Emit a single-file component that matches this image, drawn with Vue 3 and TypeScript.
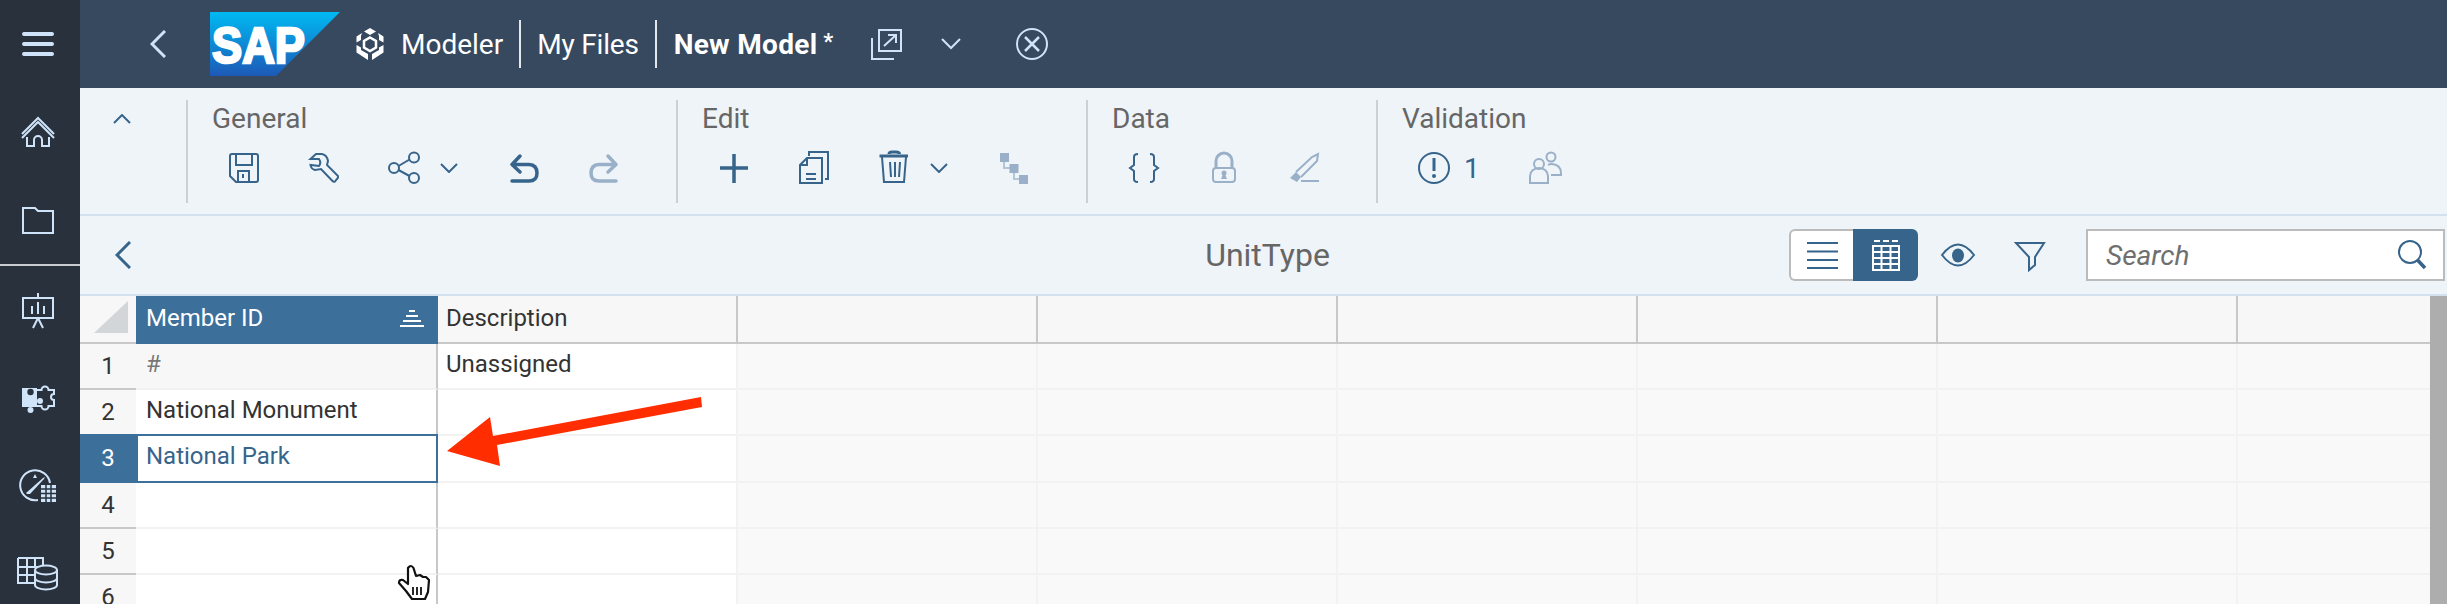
<template>
  <div class="app">
    <!-- left nav -->
    <nav class="side">
      <svg class="nav-icon" viewBox="0 0 48 48"><path d="M10 14H38M10 24H38M10 34H38" fill="none" stroke-width="4" stroke-linecap="round" /></svg>
      <svg class="nav-icon line" viewBox="0 0 48 48">
        <path d="M8 26 24 10 40 26M8 30 24 14 40 30M13 29V38H20V32a4 4 0 0 1 8 0V38H35V29" />
      </svg>
      <svg class="nav-icon line" viewBox="0 0 48 48">
        <path d="M9 12H21L24 15H39V37H9Z" />
      </svg>
      <div class="side-div"></div>
      <svg class="nav-icon line" viewBox="0 0 48 48">
        <path d="M9 14H39V34H9ZM24 9V14M24 34 19 44M24 34 29 44M18 22V30M24 18V30M30 22V30" />
      </svg>
      <svg class="nav-icon line" viewBox="0 0 48 48">
        <path class="solid" d="M8 16H23V35H8Z" />
        <circle class="hole" cx="16.5" cy="20" r="3.2" />
        <circle class="solid" cx="16.5" cy="38" r="3" />
        <circle class="solid" cx="26" cy="29" r="3" />
        <path d="M23 18H27.5A3.5 3.5 0 1 1 34.5 18H40V22A3 3 0 0 0 40 28V34H34.5A3.5 3.5 0 1 1 27.5 34H23" />
      </svg>
      <svg class="nav-icon line" viewBox="0 0 48 48">
        <path d="M36 23A15 15 0 1 0 24 40" />
        <path class="solid" d="M12 33 29 18 31 17 30 19 16 34 13 34Z" />
        <path class="solid" d="M21 14 23 18H19Z" />
        <path class="solid" d="M27 25H42V42H27Z" />
        <path class="thin" d="M32 25V42M37 25V42M27 29H42M27 33.5H42M27 38H42" />
      </svg>
      <svg class="nav-icon line" viewBox="0 0 48 48">
        <path d="M4 10H29V18M4 10V35H20M4 19H29M4 27H20M13 10V35M21 10V19" />
        <ellipse class="fill-dark" cx="32" cy="22" rx="11" ry="4.5" />
        <path d="M21 22V37C21 39.5 26 41.5 32 41.5S43 39.5 43 37V22M21 30C21 32.5 26 34.5 32 34.5S43 32.5 43 30" />
      </svg>
    </nav>

    <div class="main">
      <!-- shell bar -->
      <header class="shell">
        <svg class="back" width="16" height="28" viewBox="0 0 16 28"><path d="M15 1 2 14 15 27" /></svg>
        <svg class="logo" width="130" height="64" viewBox="0 0 130 64">
          <defs>
            <linearGradient id="sapGrad" x1="0" y1="0" x2="0" y2="1">
              <stop offset="0" stop-color="#00b9f2" />
              <stop offset="1" stop-color="#1d59b7" />
            </linearGradient>
          </defs>
          <polygon points="0,0 130,0 66,64 0,64" fill="url(#sapGrad)" />
          <text x="2" y="51" class="logo-text" textLength="93" lengthAdjust="spacingAndGlyphs">SAP</text>
        </svg>
        <svg class="app-mark" width="28" height="32" viewBox="0 0 28 32">
          <path d="M14 0 20 3.5 14 7 8 3.5ZM22 5 27.5 8.5V14.5L23 12V8ZM6 5 .5 8.5V14.5L5 12V8ZM.5 17 5 19.5V22L12 26V32L.5 24.5ZM27.5 17 23 19.5V22L16 26V32L27.5 24.5Z" fill="#fff" />
          <path d="M14 9.500 20 13V19.500L14 23 8 19.500V13Z" fill="none" stroke="#fff" stroke-width="2.500" />
        </svg>
        <span class="crumb">Modeler</span>
        <span class="bar"></span>
        <span class="crumb files">My Files</span>
        <span class="bar"></span>
        <span class="crumb model">New Model</span>
        <span class="star">*</span>
        <svg class="ext" width="34" height="34" viewBox="0 0 34 34">
          <path d="M10 3H32V24H10ZM3 11V32H25M15 19 27 8M19 8H27V16" />
        </svg>
        <svg class="shell-chev" width="20" height="12" viewBox="0 0 20 12"><path d="M1 1 10 10 19 1" /></svg>
        <svg class="close" width="34" height="34" viewBox="0 0 34 34">
          <circle cx="17" cy="17" r="15" />
          <path d="M10 10 24 24M24 10 10 24" stroke-width="2.500" />
        </svg>
      </header>

      <!-- toolbar -->
      <section class="toolbar">
        <div class="collapse">
          <svg width="18" height="10" viewBox="0 0 18 10"><path d="M1 9 9 1 17 9" /></svg>
        </div>

        <div class="group">
          <div class="group-label">General</div>
          <div class="group-row">
            <button class="tb">
              <svg viewBox="0 0 40 40"><path d="M8 6H32Q34 6 34 8V32Q34 34 32 34H12L6 28V8Q6 6 8 6ZM12 6V17H28V6M14 34V23H25V34M19 26V30" /></svg>
            </button>
            <button class="tb">
              <svg viewBox="0 0 40 40"><path d="M6.500 11 12 6H18Q23 7 24 13L23 17 34 28Q34.500 29.500 33 31L31 33.500Q29.500 34 28.500 33L17 21 11 22Q7 21 6.500 17L15 18Q17.500 14.500 15 11Z" /></svg>
            </button>
            <button class="tb">
              <svg viewBox="0 0 40 40">
                <circle cx="30" cy="9.500" r="5" /><circle cx="10" cy="20" r="5" /><circle cx="30" cy="30" r="5" />
                <path d="M14.500 18 25.500 11.500M14.500 22 25.500 28" />
              </svg>
            </button>
            <span class="chev"><svg width="18" height="10" viewBox="0 0 18 10"><path d="M1 1 9 9 17 1" /></svg></span>
            <button class="tb">
              <svg viewBox="0 0 40 40"><path class="heavy" d="M16 8 8 16.500 16 24M8 16.500H25Q33 17 33 25T25 33H8" /></svg>
            </button>
            <button class="tb off">
              <svg viewBox="0 0 40 40"><path class="heavy" d="M24 8 32 16.500 24 24M32 16.500H15Q7 17 7 25T15 33H32" /></svg>
            </button>
          </div>
        </div>

        <div class="group">
          <div class="group-label">Edit</div>
          <div class="group-row">
            <button class="tb">
              <svg viewBox="0 0 40 40"><path d="M20 6V35M6 20H34" stroke-width="3.500" /></svg>
            </button>
            <button class="tb">
              <svg viewBox="0 0 40 40">
                <path d="M13 10H28V35H6V17ZM13 10V17H6M12 26H22M12 31H22" />
                <path d="M15 8V4H34V31H31" />
              </svg>
            </button>
            <button class="tb">
              <svg viewBox="0 0 40 40">
                <path d="M5.500 8H34" stroke-width="3" /><path d="M15 6Q15 4 18 4H22Q25.500 4 25.500 6" stroke-width="3" />
                <path d="M8 9 10 34H30L32 9M16 14 17 29M21 14V29M26 14 25 29" />
              </svg>
            </button>
            <span class="chev"><svg width="18" height="10" viewBox="0 0 18 10"><path d="M1 1 9 9 17 1" /></svg></span>
            <button class="tb off">
              <svg viewBox="0 0 40 40">
                <path class="link" d="M10 14V20H16M20 25V31H25" />
                <rect class="block" x="6" y="5" width="9" height="9" />
                <rect class="block" x="15.500" y="16" width="9" height="9" />
                <rect class="block" x="25" y="27" width="9" height="9" />
              </svg>
            </button>
          </div>
        </div>

        <div class="group">
          <div class="group-label">Data</div>
          <div class="group-row">
            <button class="tb">
              <svg viewBox="0 0 40 40"><path d="M14 6Q10 6 10 9V17L6 20 10 23V31Q10 34 14 34M26 6Q30 6 30 9V17L34 20 30 23V31Q30 34 26 34" /></svg>
            </button>
            <button class="tb off">
              <svg viewBox="0 0 40 40">
                <path d="M12 20V13A8 8 0 0 1 28 13V20" stroke-width="3" />
                <rect x="9" y="20" width="22" height="14" rx="3" />
                <circle class="block" cx="20" cy="25" r="2.500" /><path class="block" d="M19 26H21L23 31H17Z" />
              </svg>
            </button>
            <button class="tb off">
              <svg viewBox="0 0 40 40">
                <path d="M12 24 28 9 34 6 33 13 17 29" />
                <path class="block" d="M6 30 12 24 17 29 13 34Z" />
                <path d="M17 33H35" />
              </svg>
            </button>
          </div>
        </div>

        <div class="group">
          <div class="group-label">Validation</div>
          <div class="group-row">
            <button class="tb tb-count">
              <svg viewBox="0 0 40 40">
                <circle cx="20" cy="20" r="15" />
                <path d="M20 10V23" stroke-width="3" /><circle class="block-dark" cx="20" cy="28" r="2" />
              </svg>
              <span class="count">1</span>
            </button>
            <button class="tb off">
              <svg viewBox="0 0 40 40">
                <circle cx="15" cy="16" r="5" /><path d="M6 35V28A9 8 0 0 1 24 28V35Z" />
                <circle cx="27" cy="9" r="4.500" /><path d="M24 17A7 7 0 0 1 28 16Q37 17 37 25V27H27" />
              </svg>
            </button>
          </div>
        </div>
      </section>

      <!-- title bar -->
      <section class="titlebar">
        <svg class="title-back" width="16" height="28" viewBox="0 0 16 28"><path d="M15 1 2 14 15 27" /></svg>
        <div class="title">UnitType</div>
        <div class="tools">
          <div class="toggle">
            <span class="toggle-l">
              <svg width="34" height="30" viewBox="0 0 34 30"><path d="M2 3H33M2 11.500H33M2 20H33M2 28H33" /></svg>
            </span>
            <span class="toggle-r">
              <svg width="30" height="32" viewBox="0 0 30 32">
                <path d="M2 7H28V31H2ZM2 13H28M2 19H28M2 25H28M10.500 7V31M19.500 7V31" />
                <path d="M3 2H9M12 2H18M21 2H27" />
              </svg>
            </span>
          </div>
          <svg class="t-eye" width="40" height="40" viewBox="0 0 40 40">
            <path d="M4 20Q20 -1 36 20 20 41 4 20Z" />
            <ellipse cx="20" cy="20.500" rx="6" ry="7" class="block-dark" />
          </svg>
          <svg class="t-funnel" width="40" height="40" viewBox="0 0 40 40"><path d="M6 8H34L25 22V30L19 35V22Z" /></svg>
          <div class="search">
            <span class="search-text">Search</span>
            <svg width="40" height="40" viewBox="0 0 40 40"><circle cx="18" cy="17" r="11" /><path d="M25.500 25 33 33" stroke-width="3.500" /></svg>
          </div>
        </div>
      </section>

      <!-- dimension grid -->
      <section class="grid">
        <div class="corner"><span class="corner-tri"></span></div>
        <div class="hd hd-active">
          <span>Member ID</span>
          <svg width="24" height="17" viewBox="0 0 24 17"><path d="M9 1H15M6 6H18M3 11H21M0 16H24" stroke="#fff" stroke-width="2" /></svg>
        </div>
        <div class="hd">Description</div>
        <div v-for="n in 6" :key="'h' + n" class="hd"></div>

        <template v-for="row in rows" :key="row.num">
          <div class="num" :class="{ 'num-active': row.active }">{{ row.num }}</div>
          <div class="cell member" :class="{ 'cell-active': row.active, 'cell-hash': row.id === '#' }">{{ row.id }}</div>
          <div class="cell desc">{{ row.desc }}</div>
          <div v-for="n in 6" :key="n" class="cell blank"></div>
        </template>
        <div class="scrollbar"></div>
      </section>
    </div>

    <!-- annotation over the screenshot -->
    <svg class="arrow" width="2447" height="604" viewBox="0 0 2447 604">
      <polygon points="447,451 490,417 493,436 701,397 702,407 497,445 500,466" fill="#ff2d00" />
    </svg>
    <svg class="hand" width="34" height="37" viewBox="0 0 34 37">
      <path d="M11 4Q14 0 16.500 4L19 12 23 11 26 13 29 13 32 16 31 28 28 35H15L9 27 2 19Q2 15 6 16L11 20Z" fill="#fff" stroke="#111" stroke-width="2.200" stroke-linejoin="round" />
      <path d="M16 23V31M20 23V31M24 23V31" stroke="#111" stroke-width="1.800" />
    </svg>
  </div>
</template>

<script setup lang="ts">
interface Row {
  num: number;
  id: string;
  desc: string;
  active?: boolean;
}

const rows: Row[] = [
  { num: 1, id: "#", desc: "Unassigned" },
  { num: 2, id: "National Monument", desc: "" },
  { num: 3, id: "National Park", desc: "", active: true },
  { num: 4, id: "", desc: "" },
  { num: 5, id: "", desc: "" },
  { num: 6, id: "", desc: "" },
];
</script>

<style>
html,
body {
  margin: 0;
  overflow: hidden;
}
</style>

<style scoped>
.app {
  position: relative;
  display: flex;
  width: 2447px;
  height: 604px;
  overflow: hidden;
  font-family: Roboto, "Noto Sans", sans-serif;
  background: #fff;
}

/* left nav */
.side {
  width: 80px;
  flex: none;
  padding: 20px 0 0 14px;
  box-sizing: border-box;
  background: #29313d;
}
.nav-icon {
  display: block;
  width: 48px;
  height: 48px;
  margin-bottom: 40px;
  stroke: #cfe3f9;
}
.nav-icon.line path,
.nav-icon.line ellipse {
  fill: none;
  stroke-width: 2;
}
.nav-icon.line .solid,
.nav-icon.line circle.solid {
  fill: #cfe3f9;
  stroke: none;
}
.nav-icon.line .hole {
  fill: #29313d;
  stroke: none;
}
.nav-icon.line .thin {
  stroke: #29313d;
  stroke-width: 1.5;
}
.nav-icon.line .fill-dark {
  fill: #29313d;
}
.side-div {
  height: 2px;
  margin: -20px 0 18px -14px;
  background: #c9ccd0;
}

/* shell bar */
.main {
  flex: 1;
  min-width: 0;
  display: flex;
  flex-direction: column;
}
.shell {
  height: 88px;
  flex: none;
  display: flex;
  align-items: center;
  background: #36495f;
  color: #fff;
}
.shell svg path,
.shell svg circle {
  fill: none;
}
.shell .app-mark path:first-child {
  fill: #fff;
}
.back {
  margin-left: 70px;
  stroke: #cfe3f9;
  stroke-width: 3;
}
.logo {
  margin-left: 44px;
}
.logo-text {
  font-family: "Liberation Sans", sans-serif;
  font-size: 50px;
  font-weight: 700;
  fill: #fff;
  stroke: #fff;
  stroke-width: 2.5;
}
.app-mark {
  margin-left: 16px;
}
.crumb {
  font-size: 28px;
  margin-left: 17px;
  white-space: nowrap;
}
.files {
  margin-left: 16px;
  letter-spacing: -0.2px;
}
.model {
  font-weight: 700;
  letter-spacing: 0.3px;
}
.bar {
  width: 2px;
  height: 48px;
  margin-left: 16px;
  background: #e3e7eb;
}
.star {
  margin: -6px 0 0 6px;
  font-size: 22px;
  font-weight: 700;
}
.ext {
  margin-left: 36px;
  stroke: #cfe3f9;
  stroke-width: 2;
}
.shell-chev {
  margin-left: 38px;
  stroke: #cfe3f9;
  stroke-width: 2;
}
.close {
  margin-left: 54px;
  stroke: #cfe3f9;
  stroke-width: 2;
}

/* toolbar */
.toolbar {
  height: 128px;
  flex: none;
  box-sizing: border-box;
  display: flex;
  align-items: flex-start;
  padding-top: 12px;
  background: #eff4f9;
  border-bottom: 2px solid #d3e0ee;
}
.collapse {
  width: 106px;
  flex: none;
  box-sizing: border-box;
  padding: 14px 0 0 33px;
  stroke: #36648b;
  fill: none;
  stroke-width: 2;
}
.collapse svg {
  display: block;
  fill: none;
}
.group {
  height: 103px;
  box-sizing: border-box;
  padding: 0 32px 0 16px;
  border-left: 2px solid #c8d0d8;
  flex: none;
}
.group-label {
  height: 38px;
  line-height: 38px;
  padding-left: 8px;
  font-size: 28px;
  color: #666;
}
.group-row {
  display: flex;
  align-items: center;
  margin-top: 10px;
  height: 40px;
}
.tb {
  width: 80px;
  height: 40px;
  flex: none;
  padding: 0;
  border: 0;
  background: none;
  display: flex;
  align-items: center;
  justify-content: center;
  stroke: #36648b;
  stroke-width: 2;
}
.tb svg {
  width: 40px;
  height: 40px;
  fill: none;
  flex: none;
  overflow: visible;
}
.tb.off {
  stroke: #9ab0c8;
}
.tb .block {
  fill: #9ab0c8;
  stroke: none;
}
.tb .link {
  stroke: #b4c5d8;
}
.tb .block-dark {
  fill: #36648b;
  stroke: none;
}
.tb .heavy {
  stroke-width: 3.5;
  stroke-linecap: round;
  stroke-linejoin: round;
}
.tb-count {
  width: 110px;
  justify-content: flex-start;
  padding-left: 20px;
}
.count {
  font-family: Roboto, sans-serif;
  font-size: 28px;
  color: #36648b;
  margin-left: 10px;
}
.chev {
  width: 40px;
  flex: none;
  display: flex;
  stroke: #36648b;
  stroke-width: 2;
  fill: none;
}
.chev svg {
  margin-left: -4px;
}

/* title bar */
.titlebar {
  height: 80px;
  flex: none;
  box-sizing: border-box;
  display: grid;
  grid-template-columns: 1fr auto 1fr;
  align-items: center;
  padding: 0 2px 0 10px;
  background: #eff4f9;
  border-bottom: 2px solid #d3e0ee;
}
.title-back {
  margin-left: 25px;
  stroke: #36648b;
  stroke-width: 3;
  fill: none;
}
.title {
  font-size: 32px;
  color: #666;
}
.tools {
  display: flex;
  align-items: center;
  justify-content: flex-end;
}
.toggle {
  display: flex;
  width: 129px;
  height: 52px;
  box-sizing: border-box;
}
.toggle-l {
  width: 64px;
  box-sizing: border-box;
  display: flex;
  align-items: center;
  justify-content: center;
  background: #fff;
  border: 2px solid #bbb;
  border-right: 0;
  border-radius: 6px 0 0 6px;
  stroke: #36648b;
  stroke-width: 2;
  fill: none;
}
.toggle-r {
  width: 65px;
  display: flex;
  align-items: center;
  justify-content: center;
  background: #36648b;
  border-radius: 0 6px 6px 0;
  stroke: #fff;
  stroke-width: 2;
  fill: none;
}
.t-eye {
  margin-left: 20px;
  stroke: #36648b;
  stroke-width: 2;
  fill: none;
}
.t-eye .block-dark {
  fill: #36648b;
  stroke: none;
}
.t-funnel {
  margin-left: 32px;
  stroke: #36648b;
  stroke-width: 2;
  fill: none;
}
.search {
  width: 359px;
  height: 52px;
  margin-left: 36px;
  box-sizing: border-box;
  display: flex;
  align-items: center;
  justify-content: space-between;
  padding: 0 11px 0 18px;
  background: #fff;
  border: 2px solid #bbb;
  stroke: #36648b;
  stroke-width: 2;
  fill: none;
}
.search-text {
  font-size: 28px;
  font-style: italic;
  color: #6f6f6f;
}

/* dimension grid */
.grid {
  position: relative;
  flex: 1;
  min-height: 0;
  overflow: hidden;
  display: grid;
  grid-template-columns: 56px 302px repeat(7, 300px);
  grid-template-rows: 48px 46px 46px 47px 46px 46px 46px;
  background: #f9f9f9;
  font-size: 24px;
  color: #333;
}
.corner {
  background: #f7f7f7;
  border-bottom: 2px solid #c8c8c8;
  display: flex;
  align-items: flex-start;
  justify-content: flex-end;
  padding: 5px 8px 0 0;
}
.corner-tri {
  width: 34px;
  height: 32px;
  background: #d2d6d9;
  clip-path: polygon(100% 0, 100% 100%, 0 100%);
}
.hd {
  box-sizing: border-box;
  display: flex;
  align-items: center;
  padding: 0 8px 2px;
  background: #f7f7f7;
  border-right: 2px solid #c8c8c8;
  border-bottom: 2px solid #c8c8c8;
}
.hd-active {
  justify-content: space-between;
  padding: 0 12px 2px 10px;
  background: #3d6f9b;
  color: #fff;
  border-color: #3d6f9b;
}
.num {
  background: #f7f7f7;
  border-bottom: 2px solid #c8c8c8;
  box-sizing: border-box;
  text-align: center;
  line-height: 44px;
}
.num-active {
  margin-top: -2px;
  line-height: 48px;
  background: #3d6f9b;
  border-color: #3d6f9b;
  color: #fff;
}
.cell {
  box-sizing: border-box;
  padding: 0 8px;
  line-height: 40px;
  background: #fff;
  border-right: 2px solid #f2f2f2;
  border-bottom: 2px solid #f2f2f2;
  white-space: nowrap;
}
.member {
  padding-left: 10px;
  border-right-color: #c8c8c8;
}
.cell-hash {
  background: #f7f7f7;
  color: #777;
}
.cell-active {
  margin-top: -2px;
  border: 2px solid #3d6f9b;
  padding-left: 8px;
  line-height: 40px;
  color: #36648b;
}
.blank {
  background: #f9f9f9;
}
.scrollbar {
  position: absolute;
  top: 0;
  right: 0;
  bottom: 0;
  width: 17px;
  background: #adadad;
}

/* annotation */
.arrow {
  position: absolute;
  left: 0;
  top: 0;
  pointer-events: none;
}
.hand {
  position: absolute;
  left: 397px;
  top: 564px;
}
</style>
